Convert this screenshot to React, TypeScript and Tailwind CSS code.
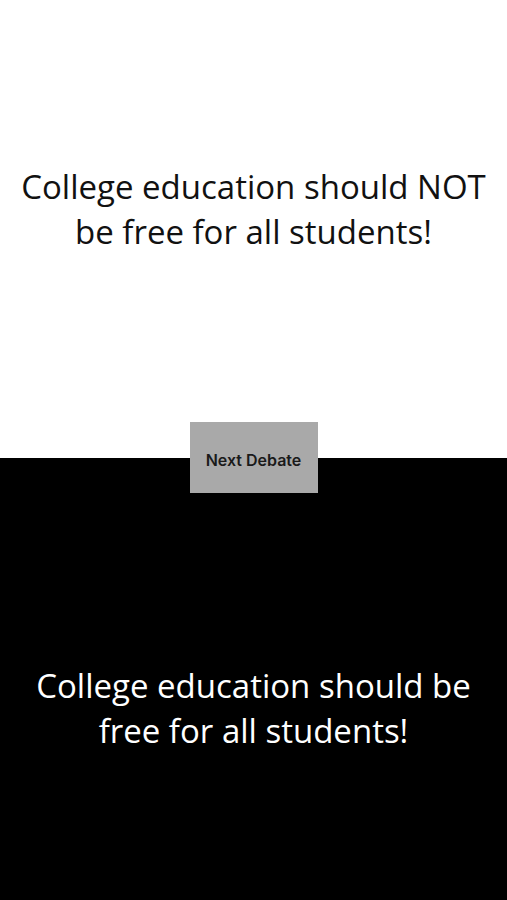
import React from "react";

const statements = {
  against: "College education should NOT be free for all students!",
  for: "College education should be free for all students!",
};

export default function App() {
  return (
    <div className="relative flex h-[900px] w-full flex-col font-['Open_Sans',sans-serif]">
      {/* top half: against */}
      <div className="flex h-[458px] items-center justify-center bg-white px-4 pb-[40px]">
        <p className="text-center text-[33px] leading-[45px] text-[#111]">
          {statements.against}
        </p>
      </div>

      {/* bottom half: for */}
      <div className="flex flex-1 items-center justify-center bg-black px-4 pt-[58px]">
        <p className="text-center text-[33px] leading-[45px] text-white">
          {statements.for}
        </p>
      </div>

      <button
        type="button"
        className="absolute left-1/2 top-[422px] flex h-[71px] w-[128px] -translate-x-1/2 items-center justify-center bg-[#a9a9a9] pt-1 font-['Inter',sans-serif] text-[16px] font-semibold text-[#1a1a1a]"
      >
        Next Debate
      </button>
    </div>
  );
}
